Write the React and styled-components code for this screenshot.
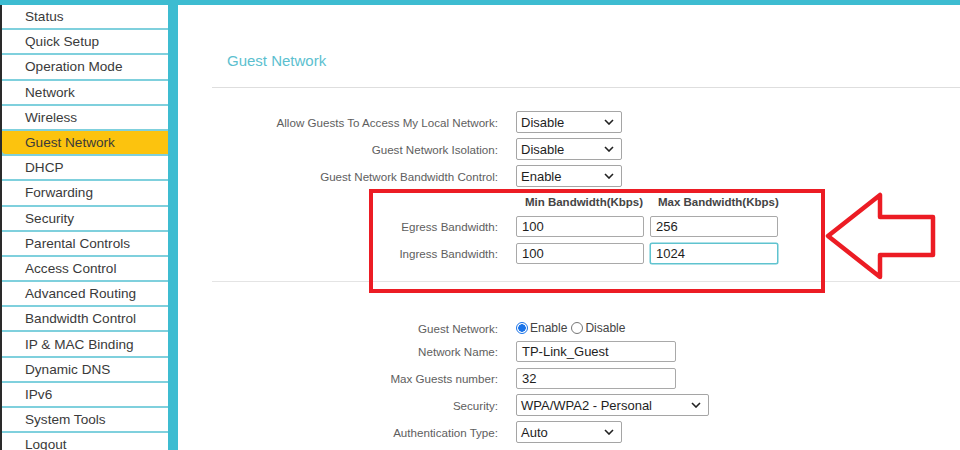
import React from "react";
import styled, { createGlobalStyle } from "styled-components";

const GlobalStyle = createGlobalStyle`
	html, body {
		margin: 0;
		padding: 0;
		background: #ffffff;
		font-family: "Liberation Sans", Arial, sans-serif;
	}
`;

const menu = [
	"Status",
	"Quick Setup",
	"Operation Mode",
	"Network",
	"Wireless",
	"Guest Network",
	"DHCP",
	"Forwarding",
	"Security",
	"Parental Controls",
	"Access Control",
	"Advanced Routing",
	"Bandwidth Control",
	"IP & MAC Binding",
	"Dynamic DNS",
	"IPv6",
	"System Tools",
	"Logout",
];

function Chevron() {
	return (
		<svg width="10" height="6" viewBox="0 0 10 6">
			<path d="M1 1 L5 5 L9 1" fill="none" stroke="#222" strokeWidth="1.6" />
		</svg>
	);
}

function Select({ value, width }) {
	return (
		<SelectBox width={width}>
			<span>{value}</span>
			<Chevron />
		</SelectBox>
	);
}

function App() {
	return (
		<>
			<GlobalStyle />
			<Page>
				<TopBar />
				<Body>
					<Sidebar>
						{menu.map((item) => (
							<MenuItem key={item} active={item === "Guest Network"}>
								{item}
							</MenuItem>
						))}
					</Sidebar>
					<Main>
						<Header>
							<Title>Guest Network</Title>
						</Header>

						<TopSection>
							<Row>
								<Label>Allow Guests To Access My Local Network:</Label>
								<Select value="Disable" width={106} />
							</Row>
							<Row>
								<Label>Guest Network Isolation:</Label>
								<Select value="Disable" width={106} />
							</Row>
							<Row>
								<Label>Guest Network Bandwidth Control:</Label>
								<Select value="Enable" width={106} />
							</Row>

							<BandHead>
								<span />
								<Pair>
									<ColHead>Min Bandwidth(Kbps)</ColHead>
									<ColHead>Max Bandwidth(Kbps)</ColHead>
								</Pair>
							</BandHead>
							<BandRow>
								<Label>Egress Bandwidth:</Label>
								<Pair>
									<TextBox width={128}>100</TextBox>
									<TextBox width={128}>256</TextBox>
								</Pair>
							</BandRow>
							<BandRow>
								<Label>Ingress Bandwidth:</Label>
								<Pair>
									<TextBox width={128}>100</TextBox>
									<TextBox width={128} focused>
										1024
									</TextBox>
								</Pair>
							</BandRow>
						</TopSection>

						<BottomSection>
							<RadioRow>
								<Label>Guest Network:</Label>
								<Radios>
									<RadioDot checked />
									<RadioText>Enable</RadioText>
									<RadioDot />
									<RadioText>Disable</RadioText>
								</Radios>
							</RadioRow>
							<Row>
								<Label>Network Name:</Label>
								<TextBox width={160}>TP-Link_Guest</TextBox>
							</Row>
							<Row>
								<Label>Max Guests number:</Label>
								<TextBox width={160}>32</TextBox>
							</Row>
							<Row>
								<Label>Security:</Label>
								<Select value="WPA/WPA2 - Personal" width={193} />
							</Row>
							<Row>
								<Label>Authentication Type:</Label>
								<Select value="Auto" width={106} />
							</Row>
						</BottomSection>

						<RedBox />
						<Arrow width="116" height="92" viewBox="0 0 116 92">
							<polygon
								points="4,46 56,5 56,27 109,27 109,65 56,65 56,87"
								fill="none"
								stroke="#ec1c24"
								strokeWidth="4.5"
								strokeLinejoin="round"
							/>
						</Arrow>
					</Main>
				</Body>
			</Page>
		</>
	);
}

export default App;

const Page = styled.div`
	width: 960px;
	height: 450px;
	overflow: hidden;
	display: flex;
	flex-direction: column;
`;

const TopBar = styled.div`
	height: 5px;
	background: #3dbcd1;
	flex-shrink: 0;
`;

const Body = styled.div`
	flex: 1;
	display: flex;
	min-height: 0;
`;

const Sidebar = styled.div`
	width: 166px;
	border-left: 2px solid #2a2a2a;
	border-right: 10px solid #3dbcd1;
	background: #7fd0dd;
	display: flex;
	flex-direction: column;
	gap: 2px;
	flex-shrink: 0;
`;

const MenuItem = styled.div`
	height: 23.2px;
	flex-shrink: 0;
	display: flex;
	align-items: center;
	padding-left: 23px;
	font-size: 13.6px;
	color: #3a3a3a;
	background: ${(props) => (props.active ? "#fcc30e" : "#ffffff")};
	border-bottom-left-radius: ${(props) => (props.active ? "4px" : "0")};
`;

const Main = styled.div`
	flex: 1;
	position: relative;
	background: #ffffff;
	padding-left: 34px;
`;

const Header = styled.div`
	height: 83px;
	box-sizing: border-box;
	padding: 47px 0 0 15px;
	border-bottom: 1px solid #dedede;
`;

const Title = styled.div`
	font-size: 15px;
	color: #5cbfcf;
	line-height: 18px;
`;

const TopSection = styled.div`
	display: flex;
	flex-direction: column;
	gap: 5px;
	padding: 23px 0 16px;
	border-bottom: 1px solid #e4e4e4;
`;

const BottomSection = styled.div`
	display: flex;
	flex-direction: column;
	gap: 5px;
	padding-top: 37px;
`;

const Row = styled.div`
	display: grid;
	grid-template-columns: 286px auto;
	column-gap: 18px;
	align-items: center;
	justify-content: start;
	min-height: 22px;
`;

const RadioRow = styled(Row)`
	min-height: 18px;
	margin-bottom: -2px;
`;

const BandHead = styled(Row)`
	min-height: 14px;
	margin-top: 3px;
	margin-bottom: 2px;
`;

const BandRow = styled(Row)`
	min-height: 21px;
	margin-bottom: 1px;
`;

const Label = styled.div`
	text-align: right;
	font-size: 11.6px;
	color: #5e5e5e;
	white-space: nowrap;
`;

const Pair = styled.div`
	display: flex;
	gap: 6px;
`;

const ColHead = styled.div`
	width: 128px;
	text-align: center;
	font-size: 11.5px;
	font-weight: bold;
	color: #444;
	padding-left: 8px;
	box-sizing: border-box;
	white-space: nowrap;
`;

const SelectBox = styled.div`
	width: ${(props) => props.width}px;
	height: 22px;
	box-sizing: border-box;
	border: 1px solid #a5a5a5;
	border-radius: 2px;
	display: flex;
	align-items: center;
	justify-content: space-between;
	padding: 0 7px 0 4px;
	font-size: 13px;
	color: #1e1e1e;
	background: #fff;
`;

const TextBox = styled.div`
	width: ${(props) => props.width}px;
	height: 21px;
	box-sizing: border-box;
	border: 1px solid ${(props) => (props.focused ? "#5fc3cf" : "#a9a9a9")};
	box-shadow: ${(props) => (props.focused ? "0 0 0 0.5px #5fc3cf" : "none")};
	border-radius: 2px;
	display: flex;
	align-items: center;
	padding-left: 5px;
	font-size: 13px;
	color: #1e1e1e;
	background: #fff;
`;

const Radios = styled.div`
	display: flex;
	align-items: center;
	font-size: 12px;
	color: #444;
`;

const RadioDot = styled.span`
	width: 12px;
	height: 12px;
	box-sizing: border-box;
	border-radius: 50%;
	border: 1px solid ${(props) => (props.checked ? "#1a73e8" : "#767676")};
	background: ${(props) =>
		props.checked ? "radial-gradient(circle, #1a73e8 0 3.5px, #fff 4px)" : "#fff"};
	margin-right: 2px;
`;

const RadioText = styled.span`
	margin-right: 4px;
`;

const RedBox = styled.div`
	position: absolute;
	left: 191px;
	top: 184px;
	width: 456px;
	height: 104px;
	box-sizing: border-box;
	border: 4.5px solid #ec1c24;
	pointer-events: none;
`;

const Arrow = styled.svg`
	position: absolute;
	left: 646px;
	top: 185px;
`;
